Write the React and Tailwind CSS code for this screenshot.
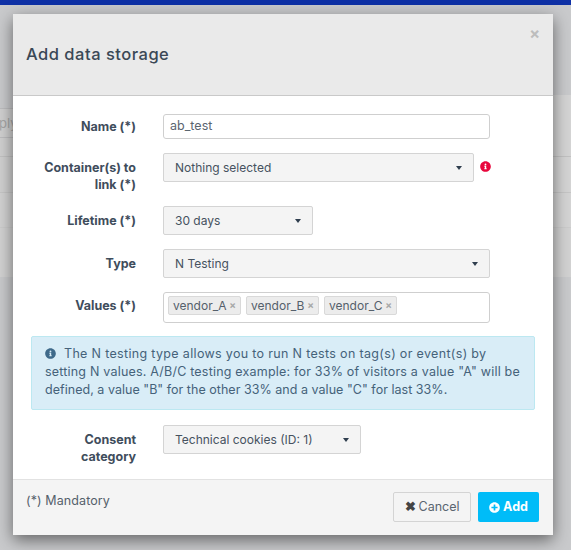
const Caret = () => (
  <span className="ml-auto w-0 h-0 border-x-[3.5px] border-x-transparent border-t-[4px] border-t-[#2f3e4e]" />
);

const InfoIcon = ({ className }) => (
  <svg viewBox="0 0 512 512" className={className} fill="currentColor">
    <path d="M256 8C119 8 8 119 8 256s111 248 248 248 248-111 248-248S393 8 256 8zm0 110a42 42 0 1 1 0 84 42 42 0 0 1 0-84zm56 254c0 7-5 12-12 12h-88c-7 0-12-5-12-12v-24c0-7 5-12 12-12h12v-64h-12c-7 0-12-5-12-12v-24c0-7 5-12 12-12h64c7 0 12 5 12 12v100h12c7 0 12 5 12 12v24z" />
  </svg>
);

const PlusIcon = ({ className }) => (
  <svg viewBox="0 0 512 512" className={className} fill="currentColor">
    <path d="M256 8C119 8 8 119 8 256s111 248 248 248 248-111 248-248S393 8 256 8zm144 276c0 7-5 12-12 12h-92v92c0 7-5 12-12 12h-56c-7 0-12-5-12-12v-92h-92c-7 0-12-5-12-12v-56c0-7 5-12 12-12h92v-92c0-7 5-12 12-12h56c7 0 12 5 12 12v92h92c7 0 12 5 12 12v56z" />
  </svg>
);

const Label = ({ children, className = "" }) => (
  <div className={`w-[105px] shrink-0 text-right font-bold text-[12.5px] leading-[17px] text-[#3f4d5c] ${className}`}>
    {children}
  </div>
);

const Select = ({ text, className }) => (
  <div className={`flex items-center h-[29px] px-[11px] bg-[#f4f4f4] border border-[#d4d4d4] rounded-[2px] text-[12px] text-[#46525f] ${className}`}>
    <span>{text}</span>
    <Caret />
  </div>
);

const Tag = ({ text }) => (
  <span className="flex items-center justify-between w-[73px] h-[19px] px-[4px] bg-[#ececec] border border-[#d9d9d9] rounded-[2px] text-[12px] text-[#55606b]">
    {text}
    <span className="text-[10px] font-bold text-[#a8a8a8]">×</span>
  </span>
);

const Strip = ({ className }) => <div className={className} />;

export default function App() {
  return (
    <div className="relative h-[550px] w-[571px] overflow-hidden bg-[#c9cacc] font-['Inter','Liberation_Sans',sans-serif]">
      <div className="h-[5px] bg-[#0f31a6]" />

      {/* dimmed page behind the modal */}
      <div className="flex justify-between">
        <div className="w-[30px]">
          <Strip className="h-[104px] bg-[#c9cacc] border-b border-[#bdbdbf]" />
          <div className="h-[29px] bg-[#d0d0d0] border-b border-[#bdbdbf] pt-[6px] text-[13px] leading-[16px] text-[#a6a6a6] -indent-[1px]">
            ply
          </div>
          <Strip className="h-[19px] bg-[#d0d0d0] border-b border-[#c2c2c2]" />
          <Strip className="h-[36px] bg-[#d0d0d0] border-b border-[#c6c6c6]" />
          <Strip className="h-[35px] bg-[#d2d2d2] border-b border-[#cccccc]" />
          <Strip className="h-[49px] bg-[#d2d2d2]" />
        </div>
        <div className="w-[30px]">
          <Strip className="h-[90px] bg-[#c9cacc]" />
          <Strip className="h-[62px] bg-[#d4d4d4] border-b border-[#c2c2c2]" />
          <Strip className="h-[36px] bg-[#d4d4d4] border-b border-[#c6c6c6]" />
          <Strip className="h-[35px] bg-[#d4d4d4] border-b border-[#cccccc]" />
          <Strip className="h-[49px] bg-[#d2d2d2]" />
        </div>
      </div>

      <div className="absolute top-[14px] left-[13px] w-[540px] h-[521px] flex flex-col bg-white shadow-[0_5px_15px_rgba(0,0,0,0.5)]">
        <div className="relative h-[82px] shrink-0 flex items-center pl-[13px] bg-[#eaeaea] border-b border-[#c9c9c9]">
          <h4 className="text-[16.5px] tracking-[0.5px] text-[#3a4856] font-medium">Add data storage</h4>
          <span className="absolute right-[13px] top-[9px] text-[16px] font-bold leading-[20px] text-[#bdbdbd]">×</span>
        </div>

        <div className="flex-1 flex flex-col pt-[18px] px-[18px]">
          <div className="flex items-start gap-[27px]">
            <Label className="pt-[4px]">Name (*)</Label>
            <div className="w-[327px] h-[25px] flex items-center pl-[6px] bg-white border border-[#cfcfcf] rounded-[3px] text-[12.5px] text-[#5a6570]">
              ab_test
            </div>
          </div>

          <div className="flex items-start gap-[27px] mt-[14px]">
            <Label className="pt-[6px]">Container(s) to link (*)</Label>
            <Select text="Nothing selected" className="w-[311px]" />
            <InfoIcon className="w-[11px] h-[11px] -ml-[21px] mt-[8px] text-[#e8063c]" />
          </div>

          <div className="flex items-start gap-[27px] mt-[13px]">
            <Label className="pt-[6px]">Lifetime (*)</Label>
            <Select text="30 days" className="w-[150px]" />
          </div>

          <div className="flex items-start gap-[27px] mt-[14px]">
            <Label className="pt-[6px]">Type</Label>
            <Select text="N Testing" className="w-[327px]" />
          </div>

          <div className="flex items-start gap-[27px] mt-[14px]">
            <Label className="pt-[5px]">Values (*)</Label>
            <div className="w-[327px] h-[31px] flex items-start gap-[5px] pl-[4px] pt-[3px] bg-white border border-[#cfcfcf] rounded-[3px]">
              <Tag text="vendor_A" />
              <Tag text="vendor_B" />
              <Tag text="vendor_C" />
            </div>
          </div>

          <div className="mt-[13px] h-[74px] pt-[8px] px-[13px] bg-[#d9edf7] border border-[#bce8f1] rounded-[2px] text-[12.5px] leading-[18px] text-[#45627a] whitespace-nowrap">
            <div className="tracking-[0.33px]">
              <InfoIcon className="inline w-[11px] h-[11px] mr-[8px] -mt-[2px] text-[#3f6a8a]" />
              The N testing type allows you to run N tests on tag(s) or event(s) by
            </div>
            <div className="tracking-[0.2px]">setting N values. A/B/C testing example: for 33% of visitors a value "A" will be</div>
            <div className="tracking-[0.03px]">defined, a value "B" for the other 33% and a value "C" for last 33%.</div>
          </div>

          <div className="flex items-start gap-[27px] mt-[15px]">
            <Label className="pt-[6px]">Consent category</Label>
            <Select text="Technical cookies (ID: 1)" className="w-[198px]" />
          </div>
        </div>

        <div className="h-[56px] shrink-0 flex items-start justify-between pt-[12px] pl-[13px] pr-[14px] bg-[#f4f4f4] border-t border-[#e2e2e2]">
          <span className="text-[12.5px] tracking-[0.1px] text-[#55606b]">(*) Mandatory</span>
          <div className="flex gap-[7px]">
            <button className="h-[30px] w-[78px] flex items-center justify-center gap-[3px] border border-[#d4d4d4] rounded-[2px] text-[12.5px] text-[#5a6570]">
              <span className="font-bold text-[#444]">✖</span>Cancel
            </button>
            <button className="h-[30px] w-[61px] flex items-center justify-center gap-[3px] bg-[#00bcf8] rounded-[2px] text-[12.5px] font-bold text-white">
              <PlusIcon className="w-[11px] h-[11px]" />Add
            </button>
          </div>
        </div>
      </div>
    </div>
  );
}
